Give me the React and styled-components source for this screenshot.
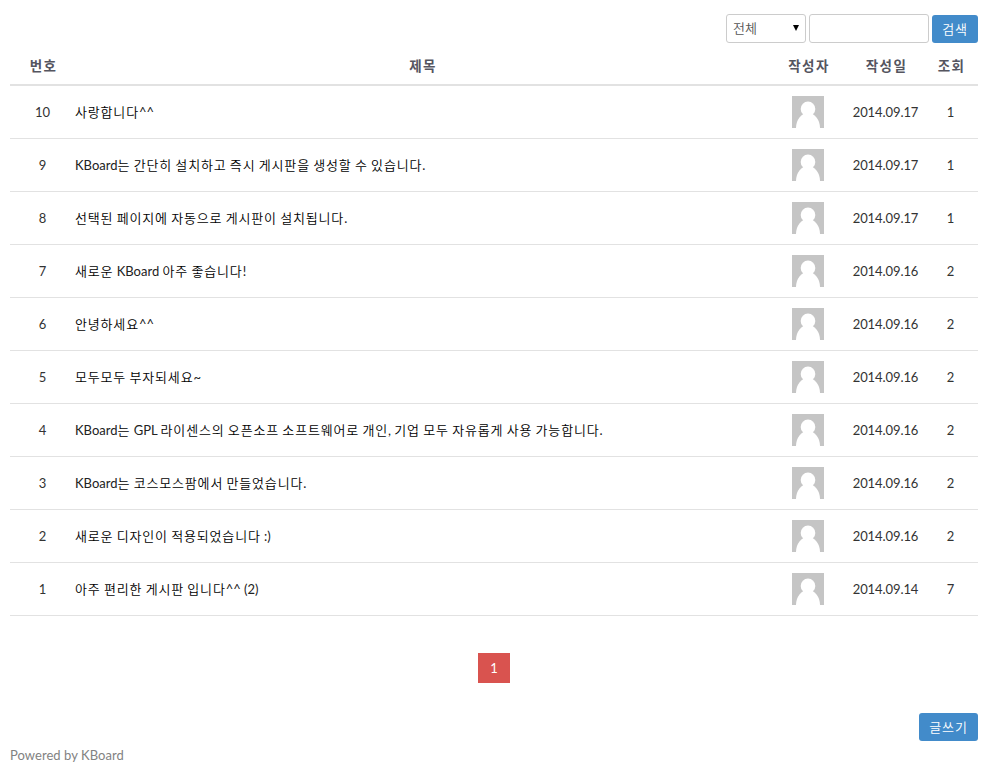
import React from "react";
import styled, { createGlobalStyle } from "styled-components";

const GlobalStyle = createGlobalStyle`
  * { box-sizing: border-box; }
  body {
    margin: 0;
    background: #fff;
    color: #333;
    font: 13px/20px Lato, "Noto Sans CJK KR", sans-serif;
  }
`;

const Board = styled.main`
  width: 968px;
  margin: 14px 0 0 10px;
`;

const SearchBar = styled.form`
  display: flex;
  justify-content: flex-end;
  align-items: flex-start;
  gap: 3px;
  height: 32px;
`;

const Select = styled.button`
  display: flex;
  justify-content: space-between;
  align-items: center;
  width: 80px;
  height: 29px;
  padding: 0 5px 2px 6px;
  border: 1px solid #ccc;
  border-radius: 3px;
  background: #fff;
  color: #555;
  font: inherit;
  font-weight: 350;
`;

const SearchInput = styled.input`
  width: 120px;
  height: 29px;
  padding: 0 6px;
  border: 1px solid #ccc;
  border-radius: 3px;
  font: inherit;
`;

const Button = styled.button`
  width: ${(p) => p.$width}px;
  height: 28px;
  margin: ${(p) => p.$top || 0}px 0 0;
  padding: 0 0 1px;
  border: 0;
  border-radius: 3px;
  background: #428bca;
  color: #fff;
  font: inherit;
  font-weight: 350;
  letter-spacing: 0.8px;
`;

const Row = styled.div`
  display: grid;
  grid-template-columns: 65px 694px 78px 77px 53px;
  align-items: center;
  height: 53px;
  border-bottom: 1px solid #e2e2e2;
`;

const HeadRow = styled(Row)`
  height: 40px;
  padding: 1px 0 0 1px;
  border-bottom-width: 2px;
  color: #55555f;
  font-size: 13.5px;
  font-weight: 700;
  letter-spacing: 1.4px;
`;

const Cell = styled.div`
  display: flex;
  justify-content: center;
  white-space: nowrap;
`;

const DateCell = styled(Cell)`
  letter-spacing: -0.08px;
`;

const Title = styled.div`
  color: #222;
  white-space: nowrap;
`;

const Hangul = styled.span`
  color: #000;
  font-weight: 350;
  letter-spacing: 0.83px;
`;

const Avatar = styled.svg`
  display: block;
  width: 32px;
  height: 32px;
`;

const Pagination = styled.nav`
  display: flex;
  justify-content: center;
  margin-top: 37px;
`;

const PageNumber = styled.span`
  width: 32px;
  height: 30px;
  background: #d9534f;
  color: #fff;
  line-height: 30px;
  text-align: center;
`;

const Actions = styled.div`
  display: flex;
  justify-content: flex-end;
  margin-top: 30px;
`;

const Footer = styled.footer`
  margin-top: 4px;
  color: #828282;
  letter-spacing: 0.05px;
`;

const posts = [
  { no: 10, title: "사랑합니다^^", date: "2014.09.17", views: 1 },
  { no: 9, title: "KBoard는 간단히 설치하고 즉시 게시판을 생성할 수 있습니다.", date: "2014.09.17", views: 1 },
  { no: 8, title: "선택된 페이지에 자동으로 게시판이 설치됩니다.", date: "2014.09.17", views: 1 },
  { no: 7, title: "새로운 KBoard 아주 좋습니다!", date: "2014.09.16", views: 2 },
  { no: 6, title: "안녕하세요^^", date: "2014.09.16", views: 2 },
  { no: 5, title: "모두모두 부자되세요~", date: "2014.09.16", views: 2 },
  { no: 4, title: "KBoard는 GPL 라이센스의 오픈소프 소프트웨어로 개인, 기업 모두 자유롭게 사용 가능합니다.", date: "2014.09.16", views: 2 },
  { no: 3, title: "KBoard는 코스모스팜에서 만들었습니다.", date: "2014.09.16", views: 2 },
  { no: 2, title: "새로운 디자인이 적용되었습니다 :)", date: "2014.09.16", views: 2 },
  { no: 1, title: "아주 편리한 게시판 입니다^^ (2)", date: "2014.09.14", views: 7 },
];

// Hangul runs are set lighter and wider than the Latin text around them.
function MixedText({ children }) {
  return children
    .split(/([가-힣]+)/)
    .map((part, i) => (i % 2 ? <Hangul key={i}>{part}</Hangul> : part));
}

function UserAvatar() {
  return (
    <Avatar viewBox="0 0 32 32" aria-hidden="true">
      <path fill="#c5c5c5" d="M0 0h32v32H0z" />
      <circle cx="16" cy="12.9" r="7.3" fill="#fff" />
      <ellipse cx="16" cy="32" rx="12" ry="15" fill="#fff" />
    </Avatar>
  );
}

export default function App() {
  return (
    <>
      <GlobalStyle />
      <Board>
        <SearchBar>
          <Select type="button">
            전체
            <svg width="8" height="8" viewBox="0 0 8 8" aria-hidden="true">
              <path d="M1 1h6L4 7z" />
            </svg>
          </Select>
          <SearchInput aria-label="검색어" />
          <Button type="button" $width={46} $top={1}>검색</Button>
        </SearchBar>
        <HeadRow>
          <Cell>번호</Cell>
          <Cell>제목</Cell>
          <Cell>작성자</Cell>
          <Cell>작성일</Cell>
          <Cell>조회</Cell>
        </HeadRow>
        {posts.map((post) => (
          <Row key={post.no}>
            <Cell>{post.no}</Cell>
            <Title><MixedText>{post.title}</MixedText></Title>
            <Cell><UserAvatar /></Cell>
            <DateCell>{post.date}</DateCell>
            <Cell>{post.views}</Cell>
          </Row>
        ))}
        <Pagination>
          <PageNumber>1</PageNumber>
        </Pagination>
        <Actions>
          <Button type="button" $width={59}>글쓰기</Button>
        </Actions>
        <Footer>Powered by KBoard</Footer>
      </Board>
    </>
  );
}
